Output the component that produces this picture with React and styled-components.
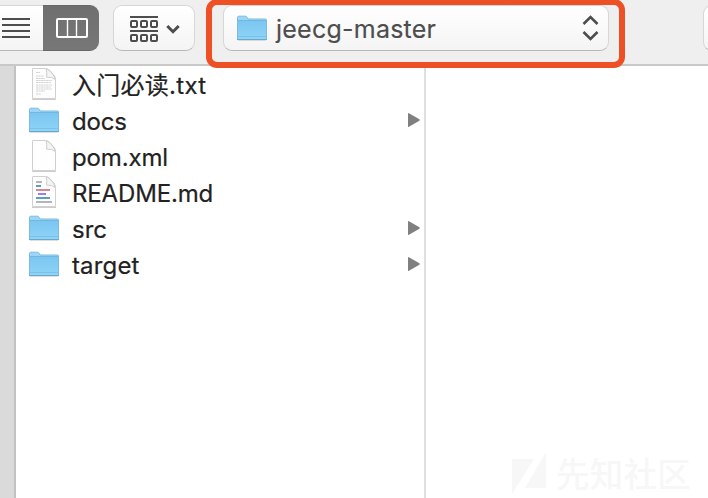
import React from "react";
import styled, { createGlobalStyle } from "styled-components";

const GlobalStyle = createGlobalStyle`
  * { box-sizing: border-box; }
  body { margin: 0; background: #fff; overflow: hidden; }
  svg { display: block; flex: none; }
`;

const Window = styled.div`
  position: relative;
  display: flex;
  flex-direction: column;
  width: 708px;
  height: 498px;
  overflow: hidden;
  background: #fff;
  font-family: Inter, "Noto Sans CJK SC", sans-serif;
`;

const Toolbar = styled.header`
  display: flex;
  align-items: flex-start;
  flex: none;
  height: 66px;
  padding-top: 5px;
  background: #efefef;
  border-bottom: 2px solid #c8c8c8;
`;

const Control = styled.div`
  display: flex;
  align-items: center;
  flex: none;
  height: 46px;
  background: linear-gradient(#ffffff, #f4f4f4);
  border: 1px solid #d6d6d6;
  border-bottom-color: #b8b8b8;
  border-radius: 9px;
`;

const ViewSwitch = styled(Control)`
  width: 99px;
  border: 0;
  border-radius: 0 9px 9px 0;
  overflow: hidden;
`;

const Segment = styled.div`
  display: flex;
  align-items: center;
  height: 46px;
  width: ${(p) => p.$width}px;
  padding-left: ${(p) => p.$inset}px;
  background: ${(p) => (p.$active ? "linear-gradient(#6f6f6f, #777777)" : "transparent")};
  border-top: 1px solid ${(p) => (p.$active ? "#686868" : "#d6d6d6")};
  border-bottom: 1px solid ${(p) => (p.$active ? "#676767" : "#b8b8b8")};
`;

const ArrangeButton = styled(Control)`
  width: 82px;
  margin-left: 14px;
  padding: 2px 0 0 16px;
  gap: 8px;
`;

const PathSelect = styled(Control)`
  width: 386px;
  margin-left: 28px;
  padding: 0 9px 0 12px;
`;

const PathName = styled.span`
  flex: 1;
  margin-left: 8px;
  padding-top: 2px;
  color: #4d4d4d;
  font-size: 25px;
  line-height: 42px;
  letter-spacing: 0.24px;
  -webkit-text-stroke: 0.15px #4d4d4d;
`;

const NextControl = styled(Control)`
  width: 40px;
  margin-left: 94px;
`;

const Browser = styled.main`
  display: flex;
  flex: 1;
`;

const Sidebar = styled.aside`
  width: 16px;
  background: #dadada;
  border-right: 2px solid #c2c2c2;
`;

const FileColumn = styled.section`
  width: 410px;
  border-right: 2px solid #dfdfdf;
`;

const FileRow = styled.div`
  display: flex;
  align-items: center;
  height: 36px;
  padding: 0 4px 0 12px;
`;

const FileName = styled.span`
  flex: 1;
  margin-left: 12px;
  padding-top: 4px;
  color: #222;
  font-size: 24px;
  line-height: 32px;
  white-space: nowrap;
  letter-spacing: ${(p) => p.$tracking}px;
  -webkit-text-stroke: 0.2px #222;
`;

const Highlight = styled.div`
  position: absolute;
  left: 206px;
  top: -1px;
  width: 419px;
  height: 69px;
  border: 6px solid #ee5026;
  border-radius: 11px;
`;

const Watermark = styled.div`
  position: absolute;
  left: 512px;
  top: 452px;
  display: flex;
  align-items: center;
  height: 42px;
  gap: 10px;
  color: #f7f7f7;
  font: 500 33.7px/42px "Noto Sans CJK SC", sans-serif;
  white-space: nowrap;
`;

function FolderIcon() {
  return (
    <svg width="32" height="28" viewBox="0 0 32 28">
      <defs>
        <linearGradient id="folder" x1="0" y1="0" x2="0" y2="1">
          <stop offset="0" stopColor="#7bc6f0" />
          <stop offset="1" stopColor="#8fd3f8" />
        </linearGradient>
      </defs>
      <path d="M2 26.5h28" stroke="#bbb" strokeOpacity=".5" />
      <path d="M1.5 25.2V3.4Q1.5 2.2 2.7 2.2H9.6Q10.5 2.2 11.2 3.3L12.3 5H29.4Q30.5 5 30.5 6V25.2Z" fill="#9cd6f6" stroke="#7dbce0" />
      <path d="M2 7H30V25H2Z" fill="url(#folder)" />
      <path d="M2 6.5H30" stroke="#6db9e4" />
      <path d="M2 22.5H30" stroke="#79c1e9" />
      <path d="M1 25.5H31" stroke="#6aa8c8" />
    </svg>
  );
}

const markdownLines = [
  [7, 6, "#b5b5b9"],
  [11, 5, "#56a3b5"],
  [15, 14, "#d6868e"],
  [19, 8, "#9c7cf0"],
  [23, 14, "#56a3b5"],
  [27, 16, "#b5b5b9"],
];

function PageIcon({ kind }) {
  return (
    <svg width="32" height="34" viewBox="0 0 32 34">
      <path d="M4 32.5H28" stroke="#999" strokeOpacity=".5" />
      <path
        d="M4.5 2Q4.5 1.5 5 1.5H17.5Q20 1.5 22 3.7L25.5 7.5Q27.5 9.8 27.5 12.5V31.5H4.5Z"
        fill="#fefefe"
        stroke="#d0d0d0"
      />
      <path d="M18 2Q19.2 4.5 18.6 10.2Q24 9.6 27 12.5Q26.8 9.8 25 7.6L21.8 4Q20 2.1 18 2Z" fill="#f4f4f4" stroke="#c9c9c9" strokeWidth=".9" />
      {kind === "text" &&
        [5.5, 9, 11.5, 13.5, 15.5, 18, 20, 22, 24, 27].map((y, i) => (
          <path
            key={y}
            d={`M8 ${y}h${[4, 8, 9, 16, 15, 16, 15, 16, 9, 5][i]}`}
            stroke="#c6c6c6"
            strokeDasharray="2.5 .6 1.5 .5"
            strokeWidth=".8"
          />
        ))}
      {kind === "markdown" &&
        markdownLines.map(([y, w, color]) => (
          <path key={y} d={`M${y === 19 ? 10 : 8} ${y}h${w}`} stroke={color} strokeWidth="2" />
        ))}
    </svg>
  );
}

function Disclosure() {
  return (
    <svg width="12" height="14" viewBox="0 0 12 14">
      <path d="M0 .6Q0 -.2 1 .2L11.4 6.3Q12.2 7 11.4 7.7L1 13.8Q0 14.2 0 13.4Z" fill="#808080" />
    </svg>
  );
}

function ListIcon() {
  return (
    <svg width="28" height="20" viewBox="0 0 28 20">
      <path d="M0 1H28M0 7H28M0 13H28M0 19H28" stroke="#4d4d4d" strokeWidth="2" />
    </svg>
  );
}

function ColumnsIcon() {
  return (
    <svg width="32" height="20" viewBox="0 0 32 20">
      <rect x="1" y="1" width="30" height="18" rx="1" fill="none" stroke="#fff" strokeWidth="2" />
      <path d="M11.5 1V19M20.5 1V19" stroke="#fff" strokeWidth="1.4" />
    </svg>
  );
}

function GroupIcon() {
  return (
    <svg width="28" height="26" viewBox="0 0 28 26">
      <g fill="none" stroke="#4d4d4d" strokeWidth="2">
        <path d="M0 1H28M0 15H28" />
        {[5, 19].map((y) =>
          [1, 11, 21].map((x) => <rect key={`${x}-${y}`} x={x} y={y} width="6" height="6" rx="1" />)
        )}
      </g>
    </svg>
  );
}

const files = [
  { name: "入门必读.txt", icon: <PageIcon kind="text" />, tracking: 0.28 },
  { name: "docs", icon: <FolderIcon />, folder: true, tracking: -0.2 },
  { name: "pom.xml", icon: <PageIcon />, tracking: -0.15 },
  { name: "README.md", icon: <PageIcon kind="markdown" />, tracking: -0.15 },
  { name: "src", icon: <FolderIcon />, folder: true, tracking: 0 },
  { name: "target", icon: <FolderIcon />, folder: true, tracking: 0.15 },
];

export default function App() {
  return (
    <Window>
      <GlobalStyle />
      <Toolbar>
        <ViewSwitch>
          <Segment $width={43} $inset={2}><ListIcon /></Segment>
          <Segment $width={56} $inset={13} $active><ColumnsIcon /></Segment>
        </ViewSwitch>
        <ArrangeButton>
          <GroupIcon />
          <svg width="14" height="10" viewBox="0 0 14 10">
            <path d="M1.3 2L7 7.7L12.7 2" fill="none" stroke="#4d4d4d" strokeWidth="3" />
          </svg>
        </ArrangeButton>
        <PathSelect>
          <FolderIcon />
          <PathName>jeecg-master</PathName>
          <svg width="17" height="26" viewBox="0 0 17 26">
            <path d="M1.5 9L8.5 2L15.5 9M1.5 17L8.5 24L15.5 17" fill="none" stroke="#4d4d4d" strokeWidth="2.6" />
          </svg>
        </PathSelect>
        <NextControl />
      </Toolbar>
      <Browser>
        <Sidebar />
        <FileColumn>
          {files.map((file) => (
            <FileRow key={file.name}>
              {file.icon}
              <FileName $tracking={file.tracking}>{file.name}</FileName>
              {file.folder && <Disclosure />}
            </FileRow>
          ))}
        </FileColumn>
      </Browser>
      <Watermark>
        <svg width="34" height="42" viewBox="0 0 34 42">
          <path d="M0 7H22L0 42ZM34 0V36H13Z" fill="#f7f7f7" />
        </svg>
        <span>先知社区</span>
      </Watermark>
      <Highlight />
    </Window>
  );
}
